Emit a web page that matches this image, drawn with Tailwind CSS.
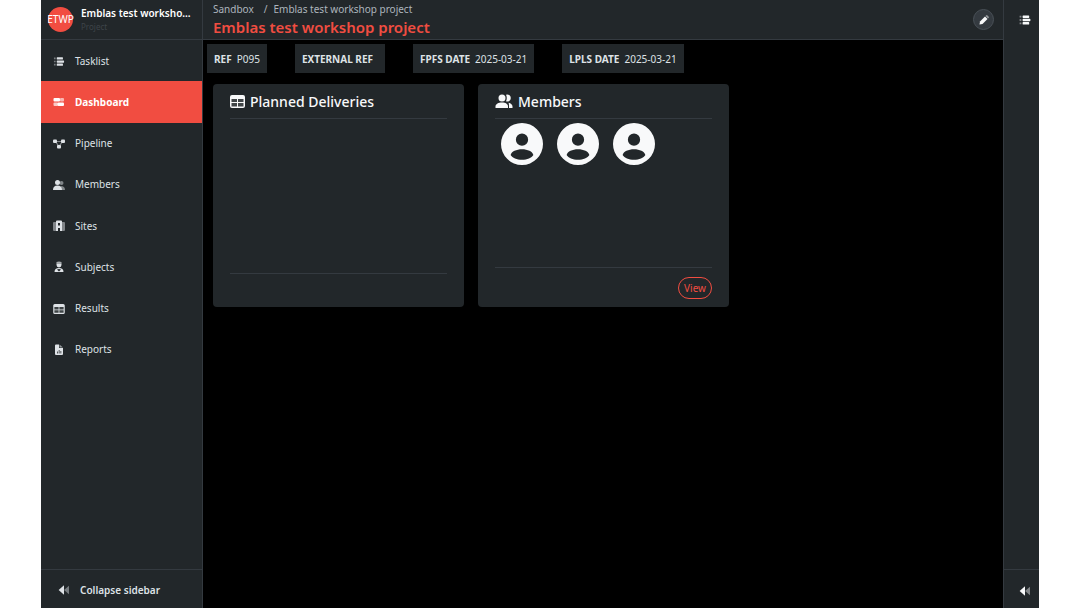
<!DOCTYPE html>
<html lang="en">
<head>
  <meta charset="UTF-8">
  <meta name="viewport" content="width=device-width, initial-scale=1.0">
  <title>Emblas test workshop project</title>
  <script src="https://cdn.jsdelivr.net/npm/@tailwindcss/browser@4"></script>
</head>
<body class="bg-white px-[41px] font-['Noto_Sans',sans-serif] text-[10px] text-[#dee2e6]">
  <!-- shared icons -->
  <svg class="hidden">
    <symbol id="icon-list" viewBox="0 0 20 16">
      <path opacity=".45" d="M1 1h3v3H1zM1 6.500h3v3H1zM1 12h3v3H1z" fill="currentColor"/>
      <rect x="6" y="0.500" width="11" height="4" rx="1" fill="currentColor"/>
      <rect x="6" y="6" width="13" height="4" rx="1" fill="currentColor"/>
      <rect x="6" y="11.500" width="11" height="4" rx="1" fill="currentColor"/>
    </symbol>
    <symbol id="icon-table" viewBox="0 0 15 13">
      <path fill="currentColor" fill-rule="evenodd" d="M2 0h11a2 2 0 0 1 2 2v9a2 2 0 0 1-2 2H2a2 2 0 0 1-2-2V2a2 2 0 0 1 2-2zM1.500 4v3H7V4zM8 4v3h5.500V4zM1.500 8v3.500H7V8zM8 8v3.500h5.500V8z"/>
      <path fill="currentColor" opacity=".15" d="M1 4h13v8H1z"/>
    </symbol>
    <symbol id="icon-person" viewBox="0 0 48 48">
      <path fill="currentColor" fill-rule="evenodd" d="M24 0a24 24 0 1 1 0 48 24 24 0 0 1 0-48zM24 12a7 7 0 1 0 0 14 7 7 0 0 0 0-14zM11 36.500C13 40 18 42 24 42s11-2 13-5.500c-1-4-6.500-6.500-13-6.500s-12 2.500-13 6.500z"/>
    </symbol>
    <symbol id="icon-back" viewBox="0 0 16 14">
      <path opacity=".45" d="M15 1v12L8 7z" fill="currentColor"/>
      <path d="M8 .500v13L.500 7z" fill="currentColor"/>
    </symbol>
  </svg>

  <div class="flex h-screen">
    <!-- left sidebar -->
    <aside class="flex w-[162px] shrink-0 flex-col border-r border-[#343a40] bg-[#22272a]">
      <div class="flex h-10 shrink-0 items-center gap-2 border-b border-[#343a40] pr-2 pb-px pl-[7px]">
        <div class="flex size-[25px] shrink-0 items-center justify-center rounded-full bg-[#f14d41] text-[10px] text-white">ETWP</div>
        <div class="min-w-0">
          <div class="truncate font-semibold leading-4 text-white">Emblas test workshop project</div>
          <div class="text-[8px] leading-3 text-[#3e4449]">Project</div>
        </div>
      </div>
      <nav class="grid h-[330px] shrink-0 auto-rows-fr">
        <a href="#" class="flex items-center gap-[9px] pt-px pl-[11px]">
          <svg class="h-[9px] w-3.5"><use href="#icon-list"/></svg>Tasklist
        </a>
        <a href="#" class="flex items-center gap-[9px] bg-[#f14d41] pt-px pl-[11px] font-bold text-white">
          <svg class="h-2.5 w-3.5" viewBox="0 0 28 20" fill="currentColor">
            <rect x="3" y="2" width="13" height="7" rx="2"/><rect x="16" y="2" width="8" height="7" rx="2" opacity=".6"/>
            <rect x="3" y="11" width="9" height="7" rx="2" opacity=".7"/><rect x="11" y="11" width="13" height="7" rx="2"/>
          </svg>Dashboard
        </a>
        <a href="#" class="flex items-center gap-[9px] pt-px pl-[11px]">
          <svg class="h-2.5 w-3.5" viewBox="0 0 28 20" fill="currentColor">
            <path opacity=".5" d="M8 4h12v2H8zM7 7l2-1 5 7-2 1zM21 7l-2-1-5 7 2 1z"/>
            <rect x="2" y="1" width="8" height="7" rx="2"/><rect x="18" y="1" width="8" height="7" rx="2"/><rect x="10" y="12" width="8" height="7" rx="2"/>
          </svg>Pipeline
        </a>
        <a href="#" class="flex items-center gap-[9px] pt-px pl-[11px]">
          <svg class="h-3 w-3.5" viewBox="0 0 28 24" fill="currentColor">
            <g opacity=".5"><circle cx="19" cy="8" r="4"/><path d="M17 14c6 0 9 3 9 8h-6z"/></g>
            <circle cx="11" cy="7" r="5"/><path d="M2 22c0-6 3-9 9-9s9 3 9 9z"/>
          </svg>Members
        </a>
        <a href="#" class="flex items-center gap-[9px] pt-px pl-[11px]">
          <svg class="h-3 w-3.5" viewBox="0 0 28 24" fill="currentColor">
            <path opacity=".5" d="M4 4h4v18H4a2 2 0 0 1-2-2V6a2 2 0 0 1 2-2zM20 4h4a2 2 0 0 1 2 2v14a2 2 0 0 1-2 2h-4z"/>
            <path fill-rule="evenodd" d="M10 1h8a2 2 0 0 1 2 2v19h-4v-6h-4v6H8V3a2 2 0 0 1 2-2zM12 6v5h4V6z"/>
          </svg>Sites
        </a>
        <a href="#" class="flex items-center gap-[9px] pt-px pl-[11px]">
          <svg class="h-3 w-3.5" viewBox="0 0 28 24" fill="currentColor">
            <path opacity=".7" d="M9 2l5-1 5 1v3H9z"/><path d="M9 5h10v3a5 5 0 0 1-10 0z"/>
            <path fill-rule="evenodd" d="M5 22c0-5 3-8 9-8s9 3 9 8zM10 17l4 4 4-4-4-1z"/>
          </svg>Subjects
        </a>
        <a href="#" class="flex items-center gap-[9px] pt-px pl-[11px]">
          <svg class="h-2.5 w-3.5"><use href="#icon-table"/></svg>Results
        </a>
        <a href="#" class="flex items-center gap-[9px] pt-px pl-[11px]">
          <svg class="h-3 w-3.5" viewBox="0 0 28 24" fill="currentColor">
            <path fill-rule="evenodd" d="M8 1h6v7h8v12a2 2 0 0 1-2 2H8a2 2 0 0 1-2-2V3a2 2 0 0 1 2-2zM10 15v4h1.500v-4zM13.500 12v7H15v-7zM17 14v5h1.500v-5z"/>
            <path opacity=".6" d="M15 1l7 6h-7z"/>
          </svg>Reports
        </a>
      </nav>
      <button type="button" class="mt-auto flex h-[39px] shrink-0 items-center gap-2.5 border-t border-[#343a40] pt-0.5 pl-[17px] font-semibold">
        <svg class="h-2.5 w-3"><use href="#icon-back"/></svg>Collapse sidebar
      </button>
    </aside>

    <main class="min-w-0 flex-1 bg-black">
      <header class="flex h-10 items-center justify-between border-b border-[#343a40] bg-[#22272a] pr-[9px] pl-2.5">
        <div class="pb-1">
          <div class="flex leading-[18px] text-[#adb5bd]">
            <a href="#">Sandbox</a><span class="mr-1.5 ml-2.5">/</span><span>Emblas test workshop project</span>
          </div>
          <h1 class="text-[15px] leading-[18px] font-semibold text-[#f14d41]">Emblas test workshop project</h1>
        </div>
        <button type="button" aria-label="Edit" class="flex size-[21px] items-center justify-center rounded-full border border-[#495057] bg-[#343a40]">
          <svg class="size-2.5" viewBox="0 0 20 20" fill="#f8f9fa">
            <path d="M1 19l1-6L12 3l5 5L7 18z"/><path opacity=".5" d="M13 2l1-1a2 2 0 0 1 3 0l2 2a2 2 0 0 1 0 3l-1 1z"/>
          </svg>
        </button>
      </header>

      <div class="flex gap-7 px-1 pt-1 leading-7">
        <div class="flex gap-[5px] bg-[#22272a] px-[7px] pt-px"><b>REF</b><span>P095</span></div>
        <div class="flex gap-[5px] bg-[#22272a] px-[7px] pt-px"><b>EXTERNAL REF</b><span></span></div>
        <div class="flex gap-[5px] bg-[#22272a] px-[7px] pt-px"><b>FPFS DATE</b><span>2025-03-21</span></div>
        <div class="flex gap-[5px] bg-[#22272a] px-[7px] pt-px"><b>LPLS DATE</b><span>2025-03-21</span></div>
      </div>

      <div class="flex gap-3.5 px-2.5 pt-[11px]">
        <section class="flex h-[223px] w-[251px] flex-col rounded-[4px] bg-[#22272a] px-[17px]">
          <h2 class="flex h-[35px] items-center gap-[5px] border-b border-[#343a40] text-[14px] font-medium text-[#f8f9fa]">
            <svg class="h-[13px] w-[15px]"><use href="#icon-table"/></svg>Planned Deliveries
          </h2>
          <div class="mt-auto h-[34px] border-t border-[#343a40]"></div>
        </section>
        <section class="flex h-[223px] w-[251px] flex-col rounded-[4px] bg-[#22272a] px-[17px]">
          <h2 class="flex h-[35px] items-center gap-[5px] border-b border-[#343a40] text-[14px] font-medium text-[#f8f9fa]">
            <svg class="h-[15px] w-[18px]" viewBox="0 0 36 30" fill="currentColor">
              <circle cx="14" cy="8" r="7"/><path d="M1 28v-3c0-5 6-8 13-8s12 3 12 8v3z"/>
              <path d="M22 1.500a7 7 0 1 1 0 13c2-4 2-9 0-13zM27 17.500c5 1 8 4 8 7.500v3h-7v-3c0-4 0-5-1-7.500z"/>
            </svg>Members
          </h2>
          <div class="flex gap-[14px] px-1.5 pt-1 text-[#f8f9fa]">
            <svg class="size-[42px]"><use href="#icon-person"/></svg>
            <svg class="size-[42px]"><use href="#icon-person"/></svg>
            <svg class="size-[42px]"><use href="#icon-person"/></svg>
          </div>
          <div class="mt-auto flex h-10 items-center justify-end border-t border-[#343a40]">
            <button type="button" class="h-[22px] w-[34px] rounded-full border border-[#f14d41] pt-px text-[#f14d41]">View</button>
          </div>
        </section>
      </div>
    </main>

    <!-- right rail -->
    <aside class="flex w-9 shrink-0 flex-col border-l border-[#343a40] bg-[#22272a] text-[#f8f9fa]">
      <button type="button" aria-label="Tasklist" class="flex h-10 items-center justify-center pl-1.5">
        <svg class="h-2.5 w-3"><use href="#icon-list"/></svg>
      </button>
      <button type="button" aria-label="Expand panel" class="mt-auto flex h-[39px] items-center justify-center border-t border-[#343a40] pt-1 pl-1.5">
        <svg class="h-2.5 w-3"><use href="#icon-back"/></svg>
      </button>
    </aside>
  </div>
</body>
</html>
